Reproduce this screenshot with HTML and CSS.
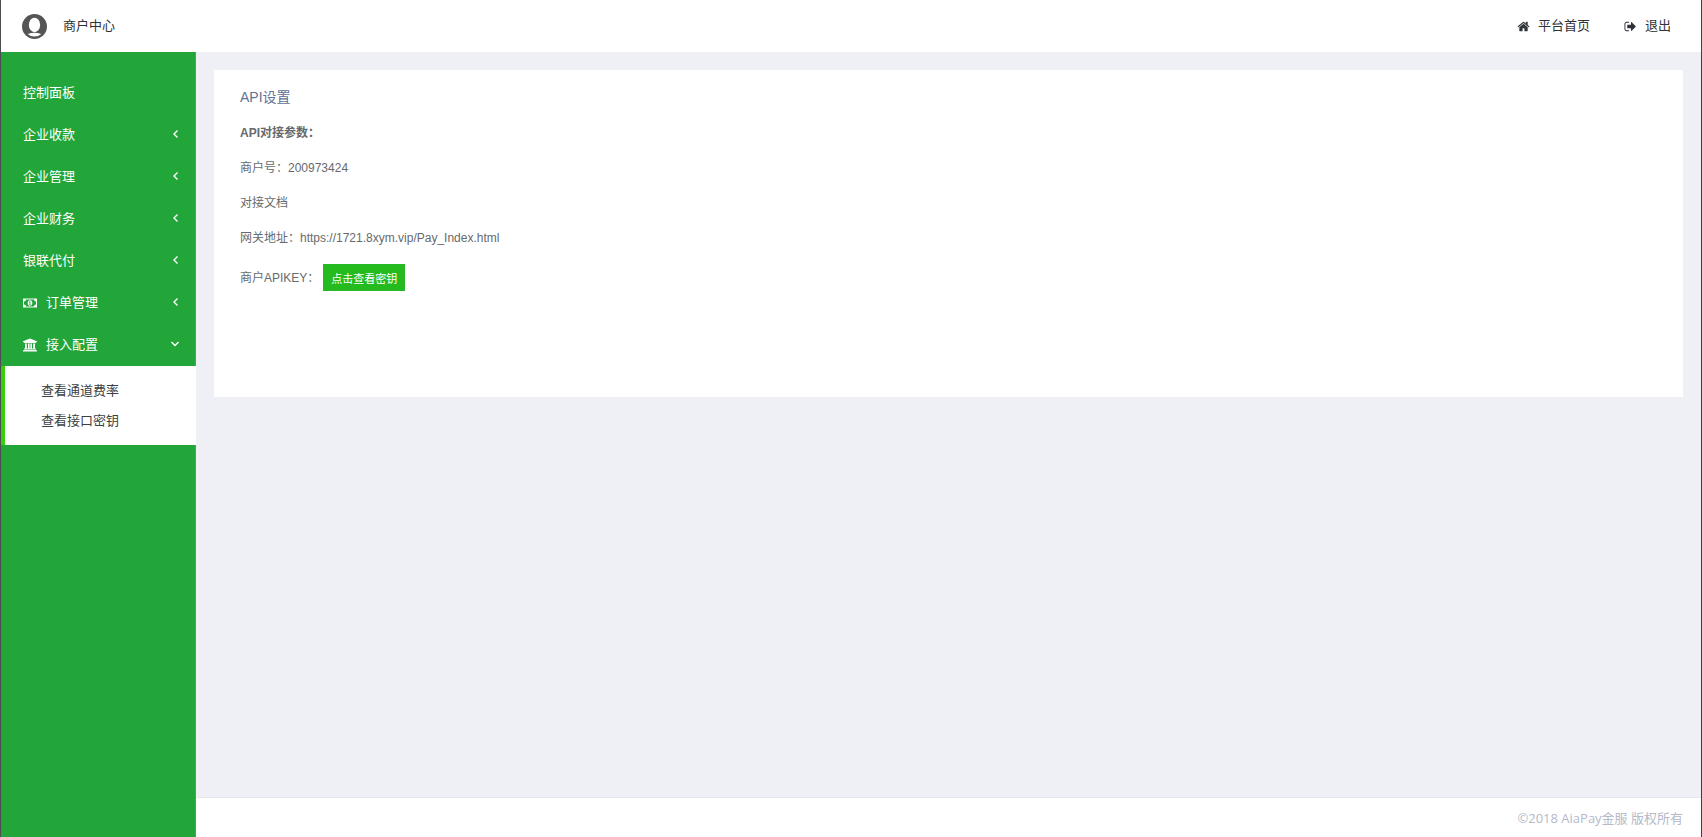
FILE: index.html
```
<!DOCTYPE html>
<html lang="zh-CN">
<head>
  <meta charset="UTF-8">
  <title>商户中心</title>
  <link rel="stylesheet" href="styles.css">
</head>
<body>
<header>
  <a class="brand" href="#">
    <svg class="avatar" viewBox="0 0 24 24">
      <circle cx="12" cy="12" r="12" fill="#555"/>
      <ellipse cx="12" cy="10.5" rx="5.4" ry="7" fill="#fff"/>
      <path d="M5.5 19.2Q12 16.8 18.5 19.2Q16 21.6 12 21.6T5.5 19.2z" fill="#fff"/>
    </svg>
    <span>商户中心</span>
  </a>
  <div class="header-links">
    <a href="#">
      <svg class="icon" viewBox="0 0 1792 1792"><path d="M1472 992v480q0 26-19 45t-45 19h-384v-384h-256v384h-384q-26 0-45-19t-19-45v-480q0-1 .5-3t.5-3l575-474 575 474q1 2 1 6zm223-69l-62 74q-8 9-21 11h-3q-13 0-21-7l-692-577-692 577q-12 8-24 7-13-2-21-11l-62-74q-8-10-7-23.5t11-21.5l719-599q32-26 76-26t76 26l244 204v-195q0-14 9-23t23-9h192q14 0 23 9t9 23v408l219 182q10 8 11 21.5t-7 23.5z"/></svg>
      <span>平台首页</span>
    </a>
    <a href="#">
      <svg class="icon" viewBox="0 0 1792 1792"><path d="M704 1440q0 4 1 20t.5 26.5-3 23.5-10 19.5-20.5 6.5h-320q-119 0-203.5-84.5t-84.5-203.5v-704q0-119 84.5-203.5t203.5-84.5h320q13 0 22.5 9.5t9.5 22.5q0 4 1 20t.5 26.5-3 23.5-10 19.5-20.5 6.5h-320q-66 0-113 47t-47 113v704q0 66 47 113t113 47h312l11.5 1 11.5 3 8 5.5 7 9 2 13.5zm928-544q0 26-19 45l-544 544q-19 19-45 19t-45-19-19-45v-288h-448q-26 0-45-19t-19-45v-384q0-26 19-45t45-19h448v-288q0-26 19-45t45-19 45 19l544 544q19 19 19 45z"/></svg>
      <span>退出</span>
    </a>
  </div>
</header>

<div class="wrapper">
  <nav>
    <ul class="menu">
      <li><a href="#">控制面板</a></li>
      <li><a href="#">企业收款 <svg class="arrow" viewBox="0 0 8 8"><path d="M6.5 0.5L3 4L6.5 7.5"/></svg></a></li>
      <li><a href="#">企业管理 <svg class="arrow" viewBox="0 0 8 8"><path d="M6.5 0.5L3 4L6.5 7.5"/></svg></a></li>
      <li><a href="#">企业财务 <svg class="arrow" viewBox="0 0 8 8"><path d="M6.5 0.5L3 4L6.5 7.5"/></svg></a></li>
      <li><a href="#">银联代付 <svg class="arrow" viewBox="0 0 8 8"><path d="M6.5 0.5L3 4L6.5 7.5"/></svg></a></li>
      <li>
        <a href="#">
          <svg class="menu-icon" viewBox="0 0 14 14">
            <path fill-rule="evenodd" d="M0 2.5h14v9H0zM3 3.5a2 2 0 0 1-2 2v3a2 2 0 0 1 2 2h8a2 2 0 0 1 2-2v-3a2 2 0 0 1-2-2z"/>
            <path fill-rule="evenodd" d="M7 4.2a2.3 2.8 0 0 1 0 5.6a2.3 2.8 0 0 1 0-5.6zM6 5.8v.7h.6v1.7H6v.6h2v-.6h-.6V5.2h-.6z"/>
          </svg>
          订单管理
          <svg class="arrow" viewBox="0 0 8 8"><path d="M6.5 0.5L3 4L6.5 7.5"/></svg>
        </a>
      </li>
      <li class="active">
        <a href="#">
          <svg class="menu-icon" viewBox="0 0 14 14">
            <path d="M7 0.5L14 3.3v1h-1v.6H1v-.6H0v-1zM2 5.4h1.8v5.2H5V5.4h1.6v5.2h.8V5.4H9v5.2h1.2V5.4H12v5.2h.9v.9H1v-.9h1zM.5 12h13v.6h.5v.9H0v-.9h.5z"/>
          </svg>
          接入配置
          <svg class="arrow" viewBox="0 0 8 8"><path d="M0.5 2L4 5.5L7.5 2"/></svg>
        </a>
        <ul class="submenu">
          <li><a href="#">查看通道费率</a></li>
          <li><a href="#">查看接口密钥</a></li>
        </ul>
      </li>
    </ul>
  </nav>

  <div class="page">
    <main>
      <section class="card">
        <h1>API设置</h1>
        <p><strong>API对接参数：</strong></p>
        <p>商户号：200973424</p>
        <p>对接文档</p>
        <p>网关地址：https://1721.8xym.vip/Pay_Index.html</p>
        <div class="key-row">商户APIKEY：<button type="button">点击查看密钥</button></div>
      </section>
    </main>
    <footer>©2018 AiaPay金服 版权所有</footer>
  </div>
</div>
</body>
</html>
```
FILE: styles.css
```
* {
  box-sizing: border-box;
}

body {
  display: flex;
  flex-direction: column;
  min-height: 100vh;
  margin: 0;
  border-left: 1px solid #4d4d4f;
  border-right: 1px solid #3c3f43;
  font: 13px/18px "Liberation Sans", "Noto Sans CJK SC", sans-serif;
  color: #676a6c;
  background: #eff0f5;
}

a {
  color: inherit;
  text-decoration: none;
}

ul {
  list-style: none;
  margin: 0;
  padding: 0;
}

header {
  display: flex;
  align-items: center;
  justify-content: space-between;
  height: 52px;
  padding: 0 30px 0 21px;
  background: #fff;
  color: #2f3236;
}

.brand {
  display: flex;
  align-items: center;
  gap: 16px;
}

.avatar {
  width: 25px;
  height: 25px;
}

.header-links {
  display: flex;
  gap: 34px;
}

.header-links a {
  display: flex;
  align-items: center;
  gap: 8px;
}

.icon {
  width: 13px;
  height: 13px;
  fill: currentColor;
}

.wrapper {
  display: flex;
  flex: 1;
}

nav {
  flex: none;
  width: 195px;
  padding-top: 20px;
  background: #22a63a;
  border-right: 1px solid #3bae50;
}

.menu > li > a {
  display: flex;
  align-items: center;
  height: 42px;
  padding: 0 16px 0 22px;
  color: #fff;
}

.menu-icon {
  width: 14px;
  height: 14px;
  margin-right: 9px;
  fill: currentColor;
}

.arrow {
  width: 8px;
  height: 8px;
  margin-bottom: 2px;
  margin-left: auto;
  fill: none;
  stroke: currentColor;
  stroke-width: 1.4;
}

.submenu {
  margin-right: -1px;
  padding: 10px 0 9px;
  border-left: 4px solid #35d20a;
  background: #fff;
}

.submenu a {
  display: block;
  padding: 6px 0 6px 36px;
  color: #3c3f43;
}

.page {
  display: flex;
  flex: 1;
  flex-direction: column;
}

main {
  flex: 1;
  padding: 18px;
}

.card {
  min-height: 327px;
  padding: 18px 26px;
  background: #fff;
  font-size: 12px;
}

.card h1 {
  margin: 0 0 18px;
  font-size: 14px;
  font-weight: normal;
  line-height: 18px;
  color: #5f7195;
}

.card p {
  margin: 0 0 17px;
}

.key-row {
  display: flex;
  align-items: center;
  gap: 4px;
}

.key-row button {
  height: 27px;
  padding: 0 7px;
  border: 1px solid #28b828;
  background: #25bb1f;
  color: #fff;
  font: 11px "Liberation Sans", "Noto Sans CJK SC", sans-serif;
}

footer {
  padding: 11px 18px 10px;
  border-top: 1px solid #e4e7ed;
  background: #fff;
  color: #b4b9c8;
  font-family: "Open Sans", "Noto Sans CJK SC", sans-serif;
  text-align: right;
}
```
